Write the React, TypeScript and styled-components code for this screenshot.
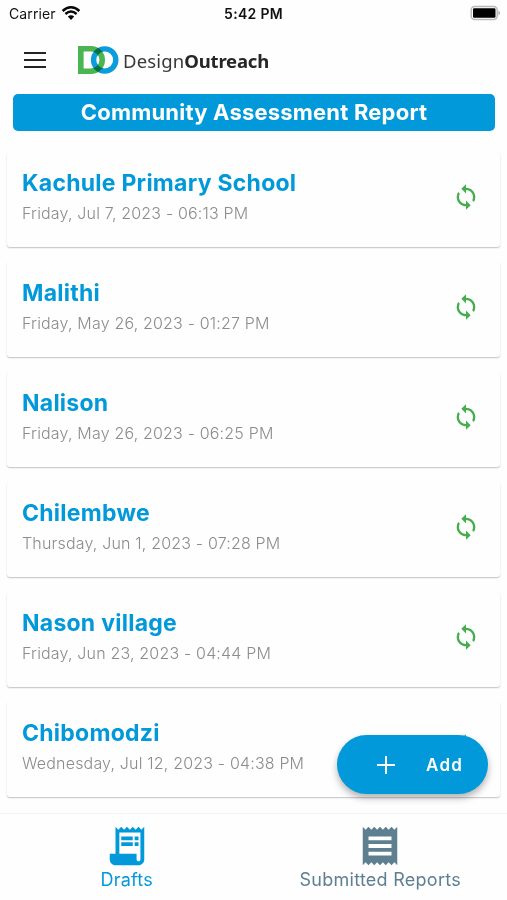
import React from "react";
import styled, { createGlobalStyle } from "styled-components";
import { MdReceipt, MdSync } from "react-icons/md";

const BLUE = "#0299db";
const GREEN = "#43ae4b";
const SLATE = "#5d7f90";

const GlobalStyle = createGlobalStyle`
  * { box-sizing: border-box; }
  body { margin: 0; background: #fff; font-family: Inter, "Liberation Sans", sans-serif; }
  button { font: inherit; border: 0; padding: 0; background: none; }
`;

const Screen = styled.div`
  position: relative;
  display: flex;
  flex-direction: column;
  width: 507px;
  height: 900px;
  overflow: hidden;
  background: #fefefe;
`;

const StatusBar = styled.div`
  display: grid;
  grid-template-columns: 1fr auto 1fr;
  align-items: center;
  height: 28px;
  padding: 0 6px 0 9px;
  font-size: 14px;
  line-height: 28px;
  color: #111;
`;

const Carrier = styled.div`
  display: flex;
  align-items: center;
  gap: 5px;
  letter-spacing: 0.1px;
  svg { margin-top: -2px; }
`;

const Clock = styled.div`
  margin-right: 3px;
  font-weight: 600;
  letter-spacing: 0.3px;
`;

const BatterySlot = styled.div`
  display: flex;
  justify-content: flex-end;
  svg { display: block; margin-top: -2px; }
`;

const Header = styled.header`
  display: flex;
  align-items: center;
  height: 64px;
  padding-left: 24px;
`;

const MenuButton = styled.button`
  display: flex;
  margin-right: 32px;
`;

const Brand = styled.div`
  display: flex;
  align-items: center;
  gap: 4px;
`;

const BrandName = styled.div`
  padding-top: 1px;
  font-family: "Noto Sans", "Open Sans", sans-serif;
  font-size: 18.5px;
  line-height: 28px;
  letter-spacing: 0.15px;
  color: #383838;
  strong { font-weight: 700; letter-spacing: -0.2px; color: #262626; }
`;

const Banner = styled.h1`
  flex: none;
  height: 37px;
  margin: 2px 12px 0 13px;
  border-radius: 5px;
  background: ${BLUE};
  color: #fff;
  text-align: center;
  font-size: 22px;
  font-weight: 700;
  line-height: 37px;
  letter-spacing: 0.2px;
`;

const List = styled.main`
  flex: 1;
  min-height: 0;
  display: flex;
  flex-direction: column;
  gap: 15px;
  padding: 21px 7px 0;
`;

const Card = styled.article`
  flex: none;
  display: flex;
  align-items: center;
  justify-content: space-between;
  height: 95px;
  padding: 0 20px 6px 15px;
  border-radius: 3px;
  background: #fefefe;
  box-shadow: 0 1px 1.5px rgba(0, 0, 0, 0.24);
`;

const CardText = styled.div`
  padding-top: 1px;
`;

const Title = styled.h2`
  margin: 0;
  color: ${BLUE};
  font-size: 23px;
  font-weight: 700;
  line-height: 32px;
  letter-spacing: 0.25px;
`;

const Stamp = styled.div`
  color: #8c8c8c;
  font-size: 16px;
  font-weight: 300;
  line-height: 28px;
  letter-spacing: 0.18px;
`;

const SyncIcon = styled(MdSync)`
  width: 28px;
  height: 28px;
  color: ${GREEN};
`;

const AddButton = styled.button`
  position: absolute;
  right: 19px;
  bottom: 106px;
  display: flex;
  align-items: center;
  gap: 31px;
  width: 151px;
  height: 59px;
  padding-left: 40px;
  border-radius: 30px;
  background: ${BLUE};
  color: #fff;
  font-size: 17px;
  font-weight: 600;
  letter-spacing: 1.3px;
  box-shadow: 0 4px 7px rgba(0, 0, 0, 0.3);
`;

const TabBar = styled.nav`
  flex: none;
  display: grid;
  grid-template-columns: 1fr 1fr;
  height: 87px;
  border-top: 1px solid #f4f4f4;
`;

const Tab = styled.button<{ $active?: boolean }>`
  display: flex;
  flex-direction: column;
  align-items: center;
  padding-top: 9px;
  color: ${(p) => (p.$active ? BLUE : SLATE)};
  font-size: 18px;
  line-height: 22px;
  letter-spacing: 0.26px;
  svg { display: block; }
`;

const records = [
  { name: "Kachule Primary School", time: "Friday, Jul 7, 2023 - 06:13 PM" },
  { name: "Malithi", time: "Friday, May 26, 2023 - 01:27 PM" },
  { name: "Nalison", time: "Friday, May 26, 2023 - 06:25 PM" },
  { name: "Chilembwe", time: "Thursday, Jun 1, 2023 - 07:28 PM" },
  { name: "Nason village", time: "Friday, Jun 23, 2023 - 04:44 PM" },
  { name: "Chibomodzi", time: "Wednesday, Jul 12, 2023 - 04:38 PM" },
];

const WifiIcon = () => (
  <svg width="20" height="14" viewBox="0 0 20 14" fill="none" stroke="#080808">
    <path d="M1.6 5Q10-2.4 18.4 5" strokeWidth="2.5" />
    <path d="M4.4 8Q10 3 15.6 8" strokeWidth="2.4" />
    <path d="M10 14 6.8 10.6Q10 7.8 13.2 10.6Z" fill="#080808" stroke="none" />
  </svg>
);

const BatteryIcon = () => (
  <svg width="31" height="16" viewBox="0 0 31 16">
    <rect x="1.2" y="1.5" width="26" height="13" rx="3.5" fill="#fff" stroke="#b9b9b9" strokeWidth="1.5" />
    <rect x="3" y="3.3" width="22.5" height="9.5" rx="1.2" fill="#000" />
    <path d="M28.5 5.5Q31.5 8 28.5 10.5Z" fill="#a5a5a5" />
  </svg>
);

const MenuIcon = () => (
  <svg width="22" height="18" viewBox="0 0 22 18" stroke="#242424" strokeWidth="2">
    <path d="M0 2h22M0 9h22M0 16h22" />
  </svg>
);

const Ring = styled.circle`
  mix-blend-mode: multiply;
`;

const LogoMark = () => (
  <svg width="41" height="28" viewBox="0 0 41 28" fill="none">
    <path d="M2.8 2.8H13A11.2 11.2 0 0 1 13 25.2H2.8Z" stroke="#49b651" strokeWidth="5.6" />
    <Ring cx="26.7" cy="14" r="11.1" stroke="#0a9ddd" strokeWidth="5.4" />
  </svg>
);

const DraftsIcon = () => (
  <svg width="46" height="46" viewBox="0 0 24 24" fill="currentColor">
    <path
      fillRule="evenodd"
      d="M19.5 3.5 18 2l-1.5 1.5L15 2l-1.5 1.5L12 2l-1.5 1.5L9 2 7.5 3.5 6 2v14H3v3c0 1.66 1.34 3 3 3h12c1.66 0 3-1.34 3-3V2l-1.5 1.5zM19 19c0 .55-.45 1-1 1s-1-.45-1-1v-3H8V5h11v14z"
    />
    <path d="M9 7h6v2H9zM16 7h2v2h-2zM9 10h6v2H9zM16 10h2v2h-2z" />
  </svg>
);

const PlusIcon = () => (
  <svg width="18" height="18" viewBox="0 0 18 18" stroke="currentColor" strokeWidth="2">
    <path d="M9 0v18M0 9h18" />
  </svg>
);

export default function App() {
  return (
    <>
      <GlobalStyle />
      <Screen>
        <StatusBar>
          <Carrier>Carrier <WifiIcon /></Carrier>
          <Clock>5:42 PM</Clock>
          <BatterySlot><BatteryIcon /></BatterySlot>
        </StatusBar>
        <Header>
          <MenuButton aria-label="Menu"><MenuIcon /></MenuButton>
          <Brand>
            <LogoMark />
            <BrandName>Design<strong>Outreach</strong></BrandName>
          </Brand>
        </Header>
        <Banner>Community Assessment Report</Banner>
        <List>
          {records.map((r) => (
            <Card key={r.name}>
              <CardText>
                <Title>{r.name}</Title>
                <Stamp>{r.time}</Stamp>
              </CardText>
              <SyncIcon />
            </Card>
          ))}
        </List>
        <TabBar>
          <Tab $active><DraftsIcon />Drafts</Tab>
          <Tab><MdReceipt size={46} />Submitted Reports</Tab>
        </TabBar>
        <AddButton><PlusIcon />Add</AddButton>
      </Screen>
    </>
  );
}
